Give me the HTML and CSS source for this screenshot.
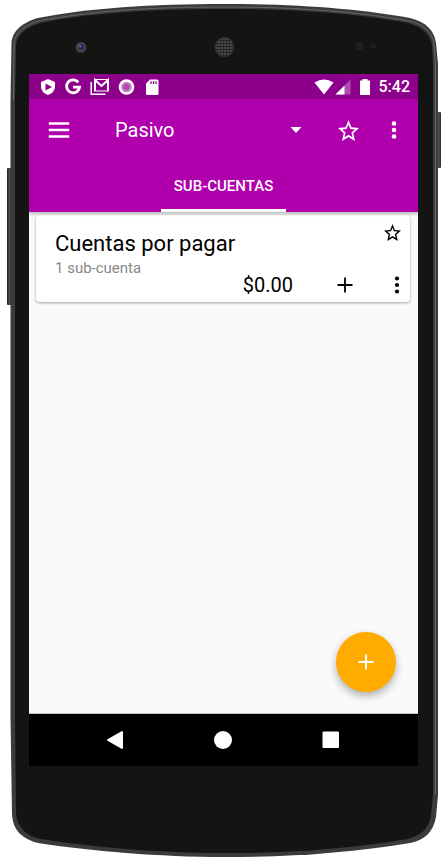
FILE: index.html
```html
<!DOCTYPE html>
<html lang="es">
<head>
<meta charset="utf-8">
<meta name="viewport" content="width=device-width, initial-scale=1">
<title>Pasivo</title>
<link rel="stylesheet" href="styles.css">
</head>
<body>
<div class="phone">
  <svg class="shell" viewBox="0 0 442 865" preserveAspectRatio="none" aria-hidden="true">
    <defs>
      <linearGradient id="key" x1="0" x2="1" y1="0" y2="0"><stop offset="0" stop-color="#1c1c1c"/><stop offset=".5" stop-color="#505050"/><stop offset="1" stop-color="#2c2c2c"/></linearGradient>
      <pattern id="mesh" width="3" height="3" patternUnits="userSpaceOnUse"><rect width="3" height="3" fill="#4a4a4a"/><circle cx="1.5" cy="1.5" r="1.1" fill="#151515"/></pattern>
    </defs>
    <rect x="7" y="168" width="5" height="137" rx="1" fill="url(#key)"/>
    <rect x="436" y="112" width="5" height="56" rx="1" fill="url(#key)"/>
    <path fill="#3b3b3b" d="M10.500 100L11.500 43C12 31 23 22 38 18C90 8 150 4 224 4C300 4 360 9 410 18C426 22 434 30 436 43L438 64V795L436 817C433 833 424 840 410 843C350 853 290 857 224 857C160 857 90 851 38 843C22 839 13 830 12 815L10.500 718Z"/>
    <path fill="none" stroke="#666" d="M13.500 100L14 44C15 32 25 25 39 21C90 11 150 7 224 7C300 7 360 12 409 21C424 24 432 32 434 44L435.500 64V795"/>
    <path fill="#141414" d="M15 100L16 45C17 34 27 27 40 23C90 13 150 9 224 9C300 9 360 14 408 23C422 27 430 34 432 45L433 64V795L431 815C429 829 420 836 407 839C350 849 290 853 224 853C160 853 90 847 41 839C26 836 17 827 16 813L15 718Z"/>
    <circle cx="81" cy="47.500" r="5.500" fill="#38383a"/><circle cx="81" cy="47" r="4" fill="#55555a"/><circle cx="81" cy="47" r="3" fill="#20203b"/><circle cx="81" cy="47" r="1.800" fill="#2c2c90"/><circle cx="80" cy="46" r=".8" fill="#c5c5dd"/>
    <circle cx="224.500" cy="47" r="9.500" fill="url(#mesh)" stroke="#303030"/>
    <circle cx="359.500" cy="46" r="4" fill="#202020"/><circle cx="373.500" cy="46" r="2.500" fill="#202020"/>
  </svg>
  <main class="screen">
    <div class="status">
      <svg viewBox="0 0 16 18" width="16" height="18"><path fill="#fff" d="M8 1L15 4V9Q15 14 8 17Q1 14 1 9V4Z"/><path fill="#8c008b" d="M5.500 5.500L12 9L5.500 12.500Z"/></svg>
      <svg viewBox="0 0 18 18" width="18" height="18"><path fill="none" stroke="#fff" stroke-width="2.800" d="M14.200 4.300A6.500 6.500 0 1 0 15.500 9.200H9"/></svg>
      <svg viewBox="0 0 20 18" width="20" height="18"><path fill="none" stroke="#fff" stroke-width="1.500" d="M1.200 4V16.200H15.500"/><path fill="none" stroke="#fff" stroke-width="2" d="M5 13V2L11.500 8L18 2V13"/><path fill="none" stroke="#fff" d="M4 1.500H19M4 13H19"/></svg>
      <svg viewBox="0 0 18 18" width="18" height="18"><circle cx="8.500" cy="9" r="7.800" fill="#fff"/><circle cx="8.500" cy="9" r="5.300" fill="#ca80ca"/><circle cx="8.500" cy="9" r="3.200" fill="#b04bb0"/></svg>
      <svg viewBox="0 0 16 18" width="16" height="18"><path fill="#fff" d="M6 1.500H13Q14.500 1.500 14.500 3V15.500Q14.500 17 13 17H3.500Q2 17 2 15.500V5.500Z"/><path stroke="#8c008b" stroke-width="1.300" d="M7 3.200V6M9.500 3.200V6M12 3.200V6"/></svg>
      <span class="spacer"></span>
      <div class="system-icons">
        <svg viewBox="0 0 20 18" width="20" height="18"><path fill="#fff" d="M.500 4.500Q10-1.500 19.500 4.500L10 16.500Z"/></svg>
        <svg viewBox="0 0 16 18" width="16" height="18"><path fill="#b04cae" d="M.500 16.500L15.500 1.500V16.500Z"/><path fill="#fff" d="M.500 16.500L9.500 7.500V16.500Z"/></svg>
      </div>
      <svg viewBox="0 0 12 18" width="12" height="18"><path fill="#fff" d="M3.500 1H8.500V2.500H11V17H1V2.500H3.500Z"/></svg>
      <time>5:42</time>
    </div>
    <header class="appbar">
      <div class="toolbar">
        <button class="icon-button" aria-label="Menú"><svg viewBox="0 0 22 22" width="22" height="22"><path stroke="#fff" stroke-width="2.300" d="M.800 4.500H21.200M.800 11H21.200M.800 17.500H21.200"/></svg></button>
        <div class="account">
          <select aria-label="Cuenta"><option>Pasivo</option></select>
          <svg viewBox="0 0 12 6" width="12" height="6"><path fill="#fff" d="M.500 0H11.500L6 6Z"/></svg>
        </div>
        <button class="icon-button" aria-label="Favorito"><svg viewBox="2 2 20 19" width="21" height="21" preserveAspectRatio="none"><path fill="#fff" d="M22 9.240l-7.190-.62L12 2 9.190 8.630 2 9.240l5.460 4.730L5.820 21 12 17.270 18.180 21l-1.630-7.030L22 9.240zM12 15.400l-3.760 2.270 1-4.280-3.320-2.880 4.380-.38L12 6.100l1.710 4.040 4.380.38-3.320 2.880 1 4.280L12 15.400z"/></svg></button>
        <button class="icon-button more" aria-label="Más opciones"><svg viewBox="0 0 6 18" width="6" height="18"><g fill="#fff"><circle cx="3" cy="2.500" r="2.300"/><circle cx="3" cy="9" r="2.300"/><circle cx="3" cy="15.500" r="2.300"/></g></svg></button>
      </div>
      <nav class="tabs"><a href="#cuentas" aria-current="page">SUB-CUENTAS</a></nav>
    </header>
    <section class="content" id="cuentas">
      <article class="card">
        <div class="names">
          <h1>Cuentas por pagar</h1>
          <p>1 sub-cuenta</p>
        </div>
        <button class="icon-button favorite" aria-label="Favorito"><svg viewBox="2 2 20 19" width="17" height="17" preserveAspectRatio="none"><path d="M22 9.240l-7.190-.62L12 2 9.190 8.630 2 9.240l5.460 4.730L5.820 21 12 17.270 18.180 21l-1.630-7.030L22 9.240zM12 15.400l-3.760 2.270 1-4.280-3.320-2.880 4.380-.38L12 6.100l1.710 4.040 4.380.38-3.320 2.880 1 4.280L12 15.400z"/></svg></button>
        <div class="actions">
          <span class="amount">$0.00</span>
          <button class="icon-button" aria-label="Añadir sub-cuenta"><svg viewBox="0 0 16 16" width="16" height="16"><path stroke="#000" stroke-width="1.800" d="M.500 8H15.500M8 .500V15.500"/></svg></button>
          <button class="icon-button more" aria-label="Más opciones"><svg viewBox="0 0 6 18" width="6" height="18"><circle cx="3" cy="2.500" r="2.100"/><circle cx="3" cy="9" r="2.100"/><circle cx="3" cy="15.500" r="2.100"/></svg></button>
        </div>
      </article>
      <button class="fab" aria-label="Añadir cuenta"><svg viewBox="0 0 16 16" width="16" height="16"><path stroke="#fff" stroke-width="2" d="M.500 8H15.500M8 .500V15.500"/></svg></button>
    </section>
    <nav class="system" aria-label="Sistema">
      <button class="icon-button" aria-label="Atrás"><svg viewBox="0 0 18 20" width="18" height="20"><path fill="#fff" stroke="#fff" stroke-width="2" stroke-linejoin="round" d="M2 10L16 2V18Z"/></svg></button>
      <button class="icon-button" aria-label="Inicio"><svg viewBox="0 0 18 18" width="18" height="18"><circle cx="9" cy="9" r="9" fill="#fff"/></svg></button>
      <button class="icon-button" aria-label="Recientes"><svg viewBox="0 0 18 18" width="18" height="18"><rect x=".5" y=".5" width="16.500" height="16.500" rx="1" fill="#fff"/></svg></button>
    </nav>
  </main>
</div>
</body>
</html>
```
FILE: styles.css
```css
* { box-sizing: border-box; }
body { margin: 0; background: #fff; font-family: Roboto, sans-serif; }
svg { display: block; flex: none; }
button { border: 0; padding: 0; background: none; font: inherit; }

.phone {
  position: relative;
  display: flex;
  min-height: 100vh;
  padding: 74px 24px 99px 29px;
}
.shell { position: absolute; inset: 0; width: 100%; height: 100%; }
.screen {
  position: relative;
  flex: 1;
  display: flex;
  flex-direction: column;
  background: #fafafa;
}

.status {
  display: flex;
  align-items: center;
  gap: 8px;
  height: 25px;
  padding: 0 8px 0 11px;
  background: #8c008b;
  color: #fff;
}
.spacer { flex: 1; }
.system-icons { display: flex; gap: 1px; }
.status time { font-size: 16px; font-weight: 500; line-height: 26px; }

.appbar {
  position: relative;
  background: #b000ad;
  color: #fff;
  box-shadow: 0 2px 3px rgba(0, 0, 0, .25);
}
.toolbar {
  display: flex;
  align-items: center;
  height: 62px;
  padding-left: 8px;
}
.icon-button {
  display: grid;
  place-items: center;
  flex: none;
  width: 44px;
  height: 44px;
}
.more { width: 48px; }
.account {
  flex: 1;
  display: flex;
  align-items: center;
  margin: 0 24px 0 34px;
}
.account select {
  appearance: none;
  flex: 1;
  min-width: 0;
  padding: 0;
  border: 0;
  background: none;
  color: #fff;
  font: 20px/28px Roboto, sans-serif;
}
.tabs { display: flex; justify-content: center; }
.tabs a {
  height: 51px;
  padding: 0 13px;
  border-bottom: 3px solid #fff;
  color: #fff;
  font-size: 15px;
  font-weight: 500;
  line-height: 51px;
  text-decoration: none;
}

.content {
  flex: 1;
  display: flex;
  flex-direction: column;
  justify-content: space-between;
  padding: 3px 8px 21px 7px;
  border-bottom: 1px solid #c4c4c4;
}
.card {
  display: grid;
  grid-template-columns: 1fr auto;
  grid-template-rows: 54px 33px;
  padding-left: 19px;
  border-radius: 4px;
  background: #fff;
  box-shadow: 0 1px 3px rgba(0, 0, 0, .35);
}
.names { padding-top: 15px; }
h1 { margin: 0; font-size: 22px; font-weight: 400; line-height: 28px; }
p { margin: 0; color: #888; font-size: 15px; line-height: 20px; }
.favorite { width: 36px; height: 34px; }
.actions {
  grid-column: 1 / -1;
  display: flex;
  align-items: center;
  justify-content: flex-end;
  height: 32px;
}
.actions .icon-button { height: 32px; }
.actions .more { width: 26px; margin-left: 17px; }
.amount { margin-right: 30px; font-size: 20px; line-height: 24px; }

.fab {
  display: grid;
  place-items: center;
  align-self: flex-end;
  width: 60px;
  height: 60px;
  margin-right: 14px;
  border-radius: 50%;
  background: #ffab00;
  box-shadow: 0 4px 8px rgba(0, 0, 0, .3);
}

.system {
  display: flex;
  align-items: center;
  justify-content: center;
  gap: 64px;
  height: 52px;
  padding-right: 1px;
  background: #000;
}
```
